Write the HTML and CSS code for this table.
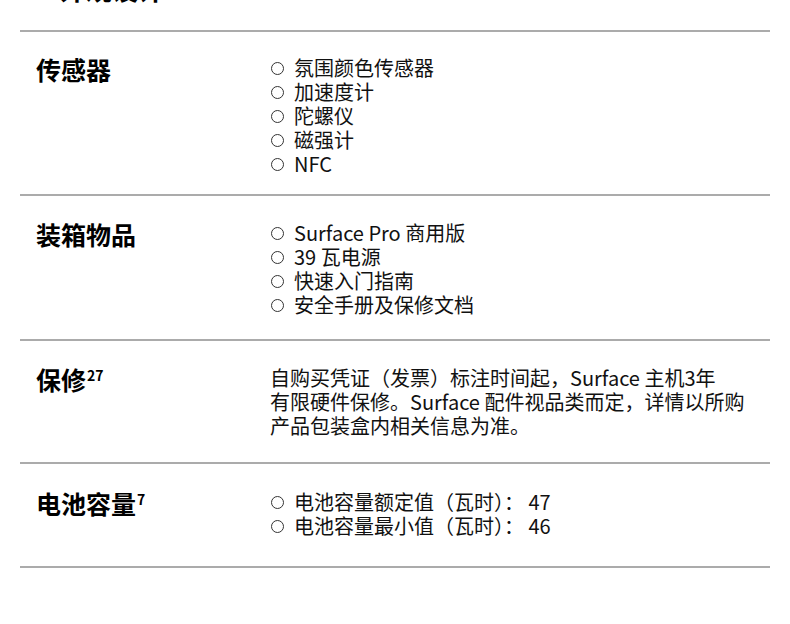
FILE: index.html
```html
<!DOCTYPE html>
<html lang="zh-CN">
<head>
<meta charset="utf-8">
<link rel="stylesheet" href="styles.css">
</head>
<body>
<div class="page">
  <h2 class="top-title">外观设计</h2>
  <section class="spec s1">
    <h3 class="spec-name">传感器</h3>
    <ul class="spec-list">
      <li>氛围颜色传感器</li>
      <li>加速度计</li>
      <li>陀螺仪</li>
      <li>磁强计</li>
      <li>NFC</li>
    </ul>
  </section>
  <section class="spec s2">
    <h3 class="spec-name">装箱物品</h3>
    <ul class="spec-list">
      <li>Surface Pro 商用版</li>
      <li>39 瓦电源</li>
      <li>快速入门指南</li>
      <li>安全手册及保修文档</li>
    </ul>
  </section>
  <section class="spec s3">
    <h3 class="spec-name">保修<sup>27</sup></h3>
    <p class="spec-text">自购买凭证（发票）标注时间起，Surface 主机3年<br>有限硬件保修。Surface 配件视品类而定，详情以所购<br>产品包装盒内相关信息为准。</p>
  </section>
  <section class="spec s4">
    <h3 class="spec-name">电池容量<sup>7</sup></h3>
    <ul class="spec-list">
      <li>电池容量额定值（瓦时）： 47</li>
      <li>电池容量最小值（瓦时）： 46</li>
    </ul>
  </section>
</div>
</body>
</html>
```

FILE: styles.css
```css
html, body {
  margin: 0;
  padding: 0;
  background: #fff;
}
body {
  font-family: "Noto Sans CJK SC", "Noto Sans", sans-serif;
  color: #111;
}
.page {
  padding: 0 20px;
}
.top-title {
  margin: -29px 0 0 0;
  padding: 0 0 0 40px;
  height: 59px;
  font-size: 26px;
  line-height: 36px;
  font-weight: 700;
  color: #000;
}
.spec {
  display: flex;
  border-top: 2px solid #ababab;
  padding: 24px 0 18px 16px;
}
.s2 { padding-top: 25px; padding-bottom: 22px; }
.s3 { padding-top: 25px; padding-bottom: 24px; }
.s4 { padding-top: 26px; padding-bottom: 28px; border-bottom: 2px solid #ababab; }
.spec-name {
  flex: 0 0 234px;
  margin: 0;
  font-size: 25px;
  line-height: 26px;
  font-weight: 700;
  color: #000;
}
.spec-name sup {
  font-size: 14px;
  vertical-align: top;
  line-height: 14px;
  position: relative;
  top: 2px;
  margin-left: 1px;
}
.spec-list {
  list-style: none;
  margin: 0;
  padding: 0;
  font-size: 20px;
  line-height: 24px;
}
.spec-list li {
  display: flex;
  align-items: center;
  height: 24px;
}
.spec-list li::before {
  content: "";
  flex: 0 0 auto;
  width: 11px;
  height: 11px;
  border: 1px solid #333;
  border-radius: 50%;
  margin: 0 10px 0 1px;
}
.spec-text {
  margin: 0;
  font-size: 20px;
  line-height: 24px;
}
```
